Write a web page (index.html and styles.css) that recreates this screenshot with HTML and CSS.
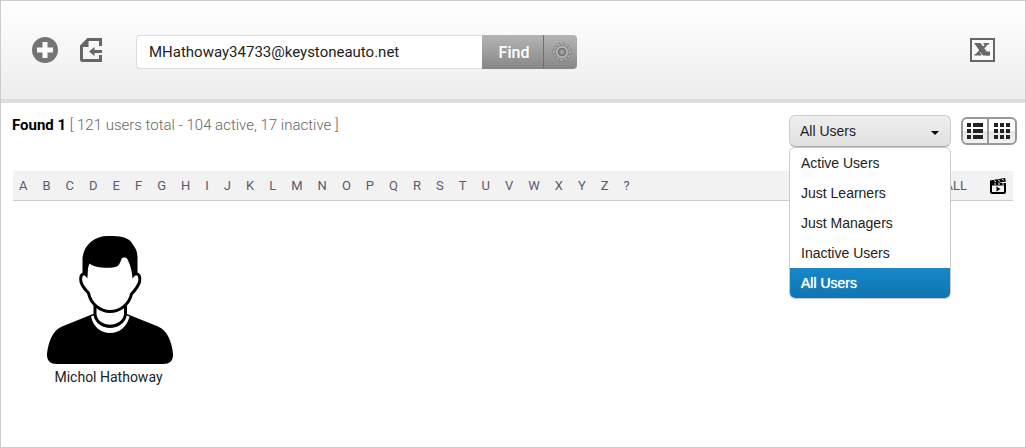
FILE: index.html
```html
<!DOCTYPE html>
<html lang="en">
<head>
    <meta charset="UTF-8">
    <meta name="viewport" content="width=device-width, initial-scale=1.0">
    <title>Users</title>
    <link rel="stylesheet" href="styles.css">
</head>
<body>
    <header class="toolbar">
        <button type="button" class="icon-btn" aria-label="Add user">
            <svg width="26" height="26" viewBox="0 0 26 26">
                <circle cx="13" cy="13" r="13" fill="#747474"/>
                <path d="M10.5 5h5v5.5H21v5h-5.5V21h-5v-5.5H5v-5h5.5z" fill="#fafafa"/>
            </svg>
        </button>
        <button type="button" class="icon-btn" aria-label="Import users">
            <svg width="22" height="24" viewBox="0 0 22 24">
                <path d="M20.500 8V1.500H8L1.500 8v13.500q0 1 1 1h18V17" fill="none" stroke="#666" stroke-width="3"/>
                <path d="M8.500 1v8H1V7.500L7.500 1z" fill="#666"/>
                <path d="M9 13.500l5.500-4.500v3H22v3h-7.500v3z" fill="#666"/>
            </svg>
        </button>
        <form class="search">
            <input type="text" class="search-input" aria-label="Search users" value="MHathoway34733@keystoneauto.net">
            <button type="submit" class="search-find">Find</button>
            <button type="button" class="search-options" aria-label="Search options">
                <svg width="20" height="20" viewBox="-10 -10 20 20">
                    <circle r="8" fill="none" stroke="#686868" stroke-width="3" stroke-dasharray="2.200 1.989"/>
                    <circle r="7.800" fill="none" stroke="#bbb" stroke-width="2.400" stroke-dasharray="1.600 2.484"/>
                    <circle r="6" fill="none" stroke="#777" stroke-width="2"/>
                    <circle r="5.200" fill="none" stroke="#b0b0b0" stroke-width="2.600"/>
                    <circle r="3.700" fill="#8c8c8c" stroke="#6a6a6a"/>
                    <circle r="1.800" fill="#a4a4a4"/>
                </svg>
            </button>
        </form>
        <button type="button" class="icon-btn export" aria-label="Export to Excel">
            <svg width="25" height="24" viewBox="0 0 25 24">
                <path d="M1 1h23v22H1z" fill="#f8f8f8" stroke="#666" stroke-width="2"/>
                <path d="M4 5h6.500l9 12.500H13z" fill="#666"/>
                <path d="M13.500 5H19v1.500h-1.200L10 15l1.500 1v1.500H4.500V16h1.200L15 6.500h-1.500z" fill="#666"/>
                <path d="M16 13.500h4v4h-4z" fill="#666"/>
            </svg>
        </button>
    </header>

    <main class="content">
        <div class="summary">
            <p class="found"><strong>Found 1</strong> [ 121 users total - 104 active, 17 inactive ]</p>
            <div class="filter">
                <select class="filter-select" aria-label="Show users">
                    <option>Active Users</option>
                    <option>Just Learners</option>
                    <option>Just Managers</option>
                    <option>Inactive Users</option>
                    <option selected>All Users</option>
                </select>
                <ul class="filter-menu">
                    <li><button type="button">Active Users</button></li>
                    <li><button type="button">Just Learners</button></li>
                    <li><button type="button">Just Managers</button></li>
                    <li><button type="button">Inactive Users</button></li>
                    <li><button type="button" class="active">All Users</button></li>
                </ul>
            </div>
            <div class="views">
                <button type="button" class="current" aria-label="List view">
                    <svg width="16" height="16" viewBox="0 0 16 16">
                        <path d="M0 0h4v4H0zM6 0h10v4H6zM0 6h4v4H0zM6 6h10v4H6zM0 12h4v4H0zM6 12h10v4H6z"/>
                    </svg>
                </button>
                <button type="button" aria-label="Grid view">
                    <svg width="16" height="16" viewBox="0 0 16 16">
                        <path d="M0 0h4v4H0zM6 0h4v4H6zM12 0h4v4h-4zM0 6h4v4H0zM6 6h4v4H6zM12 6h4v4h-4zM0 12h4v4H0zM6 12h4v4H6zM12 12h4v4h-4z"/>
                    </svg>
                </button>
            </div>
        </div>

        <nav class="letters">
            <a href="#">A</a>
            <a href="#">B</a>
            <a href="#">C</a>
            <a href="#">D</a>
            <a href="#">E</a>
            <a href="#">F</a>
            <a href="#">G</a>
            <a href="#">H</a>
            <a href="#">I</a>
            <a href="#">J</a>
            <a href="#">K</a>
            <a href="#">L</a>
            <a href="#">M</a>
            <a href="#">N</a>
            <a href="#">O</a>
            <a href="#">P</a>
            <a href="#">Q</a>
            <a href="#">R</a>
            <a href="#">S</a>
            <a href="#">T</a>
            <a href="#">U</a>
            <a href="#">V</a>
            <a href="#">W</a>
            <a href="#">X</a>
            <a href="#">Y</a>
            <a href="#">Z</a>
            <a href="#">?</a>
            <a href="#" class="all">ALL</a>
            <a href="#" class="video" aria-label="Video">
                <svg width="16" height="16" viewBox="0 0 16 16">
                    <path d="M0 2.500L15 0l1 3.500L4 5.500H0z"/>
                    <path d="M4 2.500l2 1.500M8 1.800l2 1.500M12 1l2 1.500" stroke="#f2f2f2"/>
                    <path d="M1 6h14v8q0 1-1 1H2q-1 0-1-1z" fill="#f2f2f2" stroke="#000" stroke-width="2"/>
                    <path d="M1 6.500h14" stroke="#000" stroke-width="2"/>
                    <path d="M4 6h2M8 6h2M12 6h2" stroke="#f2f2f2"/>
                    <path d="M6.500 8.500v5l4-2.500z"/>
                </svg>
            </a>
        </nav>

        <div class="users">
            <a href="#" class="user">
                <svg width="128" height="128" viewBox="0 0 128 128">
                    <!-- shirt -->
                    <path d="M47 78L16 90.500C7 94 2 106 1 118q-.5 10 10 10h106q10.500 0 10-10C126 106 121 94 112 90.500L81 78z"/>
                    <!-- collar and neck -->
                    <path d="M45 80.500l4-1.500c3 17 27 17 30.500 0l4 1.500c-5 22-34 22-38.500 0z" fill="#fff"/>
                    <path d="M49 68v10.500c2 15.500 28 15.500 30.500 0V68z" fill="#fff" stroke="#000" stroke-width="3"/>
                    <!-- face -->
                    <path d="M40 38c-5-1-6 3-5 8q1.500 5 7.500 11c2 11 12 18.500 21.500 18.500S83 69 85.500 58q6.500-7 8-12c1-5 0-9-5-8V20H40z" fill="#fff" stroke="#000" stroke-width="3"/>
                    <!-- hair -->
                    <path d="M41.500 42.500L36.500 37V22C38 9 48 0 62 0h5c10 0 18 3 20 9q4 4 4.500 12v16l-5 5.500C86 34 84 28 81 22.500q-3-3.500-5.500.500-2 6-4.500 7.500c-6 2-22 2-27.500-3Q41 33 41.500 42.500z"/>
                </svg>
                <span>Michol Hathoway</span>
            </a>
        </div>
    </main>
</body>
</html>
```
FILE: styles.css
```css
* { box-sizing: border-box; }
body { margin: 0; min-height: 100vh; border: 1px solid #ccc; background: #fff; font-family: Roboto, sans-serif; font-size: 14px; color: #222; }
button { margin: 0; padding: 0; border: 0; background: none; font: inherit; cursor: pointer; }
svg { display: block; }

.toolbar { display: flex; align-items: center; padding: 34px 30px 30px 31px; border-bottom: 4px solid #ddd; background: linear-gradient(#fff, #ededed); }
.icon-btn { margin: 0 22px 4px 0; }
.export { margin: 0 0 4px auto; }

.search { display: flex; margin-left: 12px; }
.search-input { width: 346px; height: 34px; padding: 0 12px; border: 1px solid #ddd; border-right: 0; border-radius: 4px 0 0 4px; background: #fff; font: 15px Roboto, sans-serif; color: #222; }
.search-find, .search-options { display: flex; align-items: center; justify-content: center; height: 34px; background: linear-gradient(#b5b5b5, #868686); color: #fff; }
.search-find { width: 62px; padding-left: 3px; border-right: 1px solid #707070; font-size: 16px; font-weight: 500; }
.search-options { padding-left: 3px; width: 33px; border-radius: 0 4px 4px 0; }

.content { padding: 12px; }
.summary { display: flex; align-items: flex-start; margin: 0 -4px 0 -1px; }
.found { flex: 1; margin: 0; font-size: 15px; line-height: 20px; font-weight: 300; color: #666; }
.found strong { font-weight: 700; color: #000; }

.filter { position: relative; width: 162px; margin-right: 10px; font-family: "Liberation Sans", sans-serif; }
.filter-select { display: block; width: 100%; height: 32px; padding: 0 10px; border: 1px solid #ccc; border-bottom-color: #aaa; border-radius: 6px; appearance: none; background: url("data:image/svg+xml,%3Csvg xmlns='http://www.w3.org/2000/svg' width='8' height='4'%3E%3Cpath d='M0 0h8L4 4z'/%3E%3C/svg%3E") no-repeat right 11px top 15px, linear-gradient(#efefef, #e0e0e0); font: 14px "Liberation Sans", sans-serif; color: #222; }
.filter-menu { position: absolute; top: 100%; left: 0; z-index: 1; width: 100%; margin: 0; padding: 0; overflow: hidden; border: 1px solid #ccc; border-radius: 6px; background: #fff; list-style: none; }
.filter-menu button { display: block; width: 100%; height: 30px; padding: 0 11px; text-align: left; color: #222; }
.filter-menu .active { background: linear-gradient(#1688ca, #1175b0); color: #fff; text-shadow: 0 0 1px #fff; }

.views { display: flex; margin-top: 2px; border: 2px solid #999; border-radius: 6px; background: linear-gradient(#fff 50%, #e6e6e6 50%, #f2f2f2); }
.views button { display: flex; align-items: center; justify-content: center; width: 26px; height: 24px; }
.views .current { border-right: 2px solid #999; }
.views svg { fill: #222; }

.letters { display: flex; align-items: center; gap: 15px; height: 30px; margin-top: 24px; padding: 0 7px 0 6px; border-bottom: 1px solid #ccc; background: #f2f2f2; font-size: 13px; }
.letters a { color: #5a5a70; text-decoration: none; }
.letters .all { margin-left: auto; }
.letters .video { margin-left: 8px; }

.users { display: flex; flex-wrap: wrap; padding: 35px 33px; }
.user { display: flex; flex-direction: column; align-items: center; color: #222; line-height: 20px; text-decoration: none; }
.user span { margin: 3px 3px 0 0; }
```
